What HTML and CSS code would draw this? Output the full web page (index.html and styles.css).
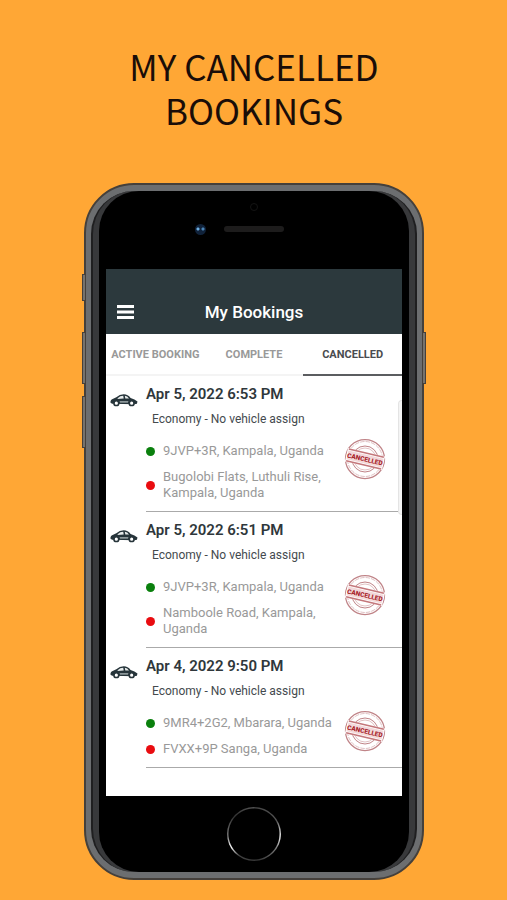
FILE: index.html
```
<!DOCTYPE html>
<html lang="en">
<head>
	<meta charset="UTF-8">
	<meta name="viewport" content="width=device-width, initial-scale=1">
	<title>My Cancelled Bookings</title>
	<link rel="stylesheet" href="styles.css">
</head>
<body>
<!-- shared drawings -->
<svg class="sprite" aria-hidden="true">
	<symbol id="car" viewBox="1 1 53 26">
		<path d="M2 19 Q1 13 8 11 L13 9 Q19 3 27 3 Q35 3 40 10 Q48 12 53 17 L52 21 L47 22 L5 21 Z" fill="#26343a"/>
		<path d="M16 10 Q20 6 26 6 L27 11 L15 12 Z M29 6 Q34 6 37 11 L30 11 Z" fill="#e8ecec"/>
		<path d="M19 16 H36 L35 19 H20 Z" fill="#8b9699"/>
		<circle cx="13" cy="20" r="4.5" fill="#fff" stroke="#26343a" stroke-width="3"/>
		<circle cx="42" cy="20" r="4.5" fill="#fff" stroke="#26343a" stroke-width="3"/>
	</symbol>
	<symbol id="stamp" viewBox="0 0 84 84">
		<g fill="none" stroke="#c08488">
			<circle cx="42" cy="42" r="39" stroke-width="2.5"/>
			<circle cx="42" cy="42" r="35" stroke-width="1" stroke-dasharray="9 2"/>
			<circle cx="42" cy="42" r="26" stroke-width="2"/>
			<circle cx="42" cy="42" r="22" stroke-width="1"/>
		</g>
		<g transform="rotate(13 42 42)">
			<rect x="4" y="28" width="76" height="28" fill="#fff"/>
			<rect x="6" y="33" width="72" height="18" fill="#f3d9da"/>
			<path d="M6 30 H78 M6 54 H78" stroke="#c4777b" stroke-width="3"/>
			<text x="42" y="47" text-anchor="middle" class="stamp-text">CANCELLED</text>
		</g>
	</symbol>
</svg>

<main class="page">
	<h1>MY CANCELLED BOOKINGS</h1>

	<div class="phone">
		<span class="key mute"></span>
		<span class="key vol-up"></span>
		<span class="key vol-down"></span>
		<span class="key power"></span>
		<div class="rim">
			<div class="face">
				<div class="sensors">
					<span class="proximity"></span>
					<span class="camera"></span>
					<span class="speaker"></span>
				</div>

				<div class="screen">
					<header class="topbar">
						<button class="menu" aria-label="Menu">
							<svg width="18" height="14" viewBox="0 0 18 14"><path d="M0 1.5H17M0 7H17M0 12.5H17" stroke="#fff" stroke-width="3"/></svg>
						</button>
						<h2>My Bookings</h2>
					</header>
					<nav class="tabs">
						<button>ACTIVE BOOKING</button>
						<button>COMPLETE</button>
						<button class="active">CANCELLED</button>
					</nav>

					<div class="list">
						<article class="item">
							<svg class="car"><use href="#car"/></svg>
							<div class="info">
								<h3>Apr 5, 2022 6:53 PM</h3>
								<p class="type">Economy - No vehicle assign</p>
								<div class="trip">
									<ul>
										<li class="from">9JVP+3R, Kampala, Uganda</li>
										<li class="to">Bugolobi Flats, Luthuli Rise, Kampala, Uganda</li>
									</ul>
									<svg class="stamp"><use href="#stamp"/></svg>
								</div>
							</div>
						</article>
						<article class="item">
							<svg class="car"><use href="#car"/></svg>
							<div class="info">
								<h3>Apr 5, 2022 6:51 PM</h3>
								<p class="type">Economy - No vehicle assign</p>
								<div class="trip">
									<ul>
										<li class="from">9JVP+3R, Kampala, Uganda</li>
										<li class="to">Namboole Road, Kampala, Uganda</li>
									</ul>
									<svg class="stamp"><use href="#stamp"/></svg>
								</div>
							</div>
						</article>
						<article class="item">
							<svg class="car"><use href="#car"/></svg>
							<div class="info">
								<h3>Apr 4, 2022 9:50 PM</h3>
								<p class="type">Economy - No vehicle assign</p>
								<div class="trip">
									<ul>
										<li class="from">9MR4+2G2, Mbarara, Uganda</li>
										<li class="to">FVXX+9P Sanga, Uganda</li>
									</ul>
									<svg class="stamp"><use href="#stamp"/></svg>
								</div>
							</div>
						</article>
						<span class="thumb"></span>
					</div>
				</div>
				<!--/screen-->

				<div class="chin"><button class="home" aria-label="Home"></button></div>
			</div>
		</div>
	</div>
	<!--/phone-->
</main>
</body>
</html>
```
FILE: styles.css
```
body,h1,h2,h3,p,ul {margin:0;padding:0;}
* {
	box-sizing:border-box;
}
body {
	background:#ffa735;
	font-family:Roboto, sans-serif;
}
button {
	padding:0;
	border:0;
	background:none;
	font:inherit;
}
.sprite {
	display:none;
}
.page {
	max-width:560px;
	margin:0 auto;
	padding:44px 83px 20px 84px;
}
h1 {
	margin-bottom:51px;
	color:#1a0d08;
	font:400 35px/44px "Noto Sans CJK SC", sans-serif;
	text-align:center;
}

/* phone body */
.phone {
	position:relative;
	padding:6px 5px;
	border:2px solid #45403b;
	border-radius:50px;
	background:#6c6e70;
}
.rim {
	padding:0 6px;
	border:solid #1f1f20;
	border-width:0 2px;
	border-radius:43px;
	background:#38393b;
}
.face {
	padding:0 7px;
	border-radius:40px;
	background:#000;
}
.key {
	position:absolute;
	width:4px;
	border:1px solid #45403b;
	background:#77736d;
}
.mute {
	left:-4px;
	top:89px;
	height:27px;
}
.vol-up {
	left:-4px;
	top:147px;
	height:52px;
}
.vol-down {
	left:-4px;
	top:211px;
	height:52px;
}
.power {
	right:-4px;
	top:147px;
	height:52px;
}
.sensors {
	position:relative;
	display:flex;
	justify-content:center;
	height:78px;
	padding-top:35px;
}
.speaker {
	width:60px;
	height:6px;
	border-radius:3px;
	background:#1d1c1c;
}
.camera {
	position:absolute;
	left:calc(50% - 59px);
	top:33px;
	width:11px;
	height:11px;
	border-radius:50%;
	background:radial-gradient(circle at 3px 5px, #6eaee0 1px, transparent 2px), radial-gradient(circle at 8px 5px, #4b86b8 1px, transparent 2px), #10223a;
}
.proximity {
	position:absolute;
	left:calc(50% - 4px);
	top:12px;
	width:8px;
	height:8px;
	border:1px solid #141414;
	border-radius:50%;
}
.chin {
	display:flex;
	justify-content:center;
	padding:11px 0;
}
.home {
	width:54px;
	height:54px;
	border-radius:50%;
	background:radial-gradient(circle, #000 25px, transparent 26px), conic-gradient(#444 0deg, #555 60deg, #eee 95deg, #777 125deg, #333 170deg, #444 215deg, #fff 240deg, #777 265deg, #333 310deg, #555 360deg);
}

/* app */
.screen {
	min-height:527px;
	background:#fff;
}
.topbar {
	display:grid;
	grid-template-columns:40px 1fr 40px;
	align-items:center;
	height:65px;
	padding-top:20px;
	background:#2c393d;
	color:#fff;
}
.menu {
	display:flex;
	justify-content:center;
}
h2 {
	font-size:17px;
	font-weight:500;
	line-height:20px;
	text-align:center;
}
.tabs {
	display:grid;
	grid-template-columns:repeat(3, 1fr);
}
.tabs button {
	height:42px;
	border-bottom:2px solid #f4f4f4;
	color:#999;
	font-size:11px;
	font-weight:700;
	white-space:nowrap;
}
.tabs .active {
	border-color:#5b5d60;
	color:#4a4c4f;
}
.list {
	position:relative;
}
.item {
	display:flex;
	padding-left:4px;
}
.car {
	flex:none;
	width:28px;
	height:14px;
	margin:17px 8px 0 0;
}
.info {
	flex:1;
	padding:8px 0 10px;
	border-bottom:1px solid #aaa;
}
h3 {
	color:#2f373b;
	font-size:15px;
	font-weight:600;
	line-height:20px;
}
.type {
	margin:7px 0 11px 6px;
	color:#444a4e;
	font-size:12px;
	line-height:16px;
}
.trip {
	display:flex;
	align-items:flex-start;
	padding-right:16px;
}
.trip ul {
	flex:1;
	display:grid;
	gap:10px;
	padding-top:5px;
	list-style:none;
}
.trip li {
	display:flex;
	align-items:center;
	gap:8px;
	color:#999;
	font-size:13px;
	line-height:16px;
}
.trip li::before {
	content:"";
	flex:none;
	width:9px;
	height:9px;
	border-radius:50%;
}
.trip .from::before {
	background:#0a800d;
}
.trip .to::before {
	background:#e90c10;
}
.stamp {
	flex:none;
	width:42px;
	height:42px;
}
.stamp-text {
	fill:#a9262d;
	font:900 13px Roboto, sans-serif;
}
.thumb {
	position:absolute;
	top:24px;
	right:0;
	width:4px;
	height:115px;
	border:1px solid #e4e4e4;
	border-right:0;
	border-radius:4px 0 0 4px;
	background:#f4f4f4;
}
```
